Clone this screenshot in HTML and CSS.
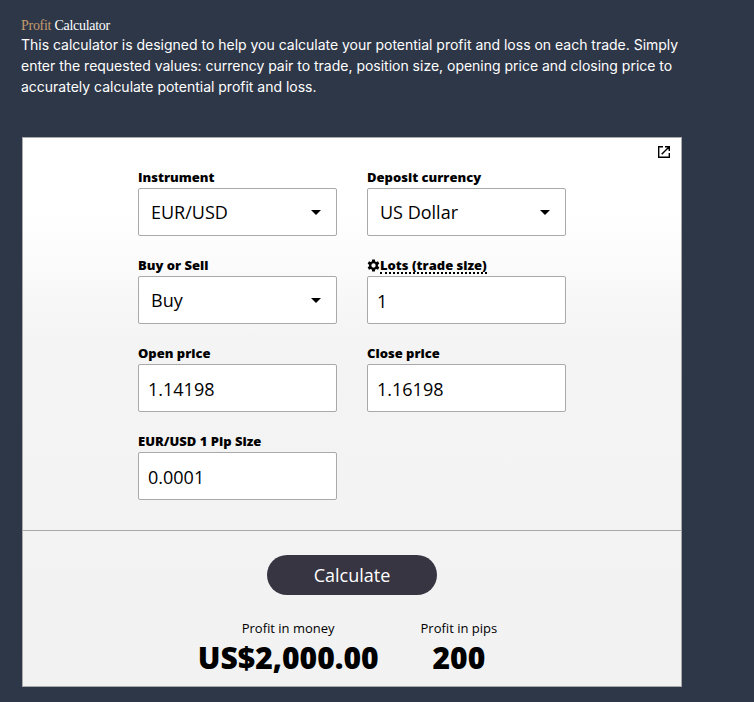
FILE: index.html
```html
<!DOCTYPE html>
<html lang="en">
<head>
<meta charset="UTF-8">
<meta name="viewport" content="width=device-width, initial-scale=1.0">
<title>Profit Calculator</title>
<link rel="stylesheet" href="styles.css">
</head>
<body>
<div class="intro">
  <h1 class="title"><span class="accent">Profit</span> Calculator</h1>
  <p class="description">This calculator is designed to help you calculate your potential profit and loss on each trade. Simply enter the requested values: currency pair to trade, position size, opening price and closing price to accurately calculate potential profit and loss.</p>
</div>
<form class="calculator">
  <div class="toolbar">
    <svg class="open-icon" viewBox="0 0 14 14" width="14" height="14">
      <path d="M6 1.700H1.700v10.600h10.600V8M8 1.700h4.300V6M12 2L4.700 9.300" fill="none" stroke="#000" stroke-width="1.400"/>
    </svg>
  </div>
  <div class="fields">
    <div class="field">
      <label for="instrument">Instrument</label>
      <div class="select">
        <select id="instrument"><option>EUR/USD</option></select>
        <svg class="arrow" viewBox="0 0 10 5" width="10" height="5"><path d="M0 0h10L5 5z"/></svg>
      </div>
    </div>
    <div class="field">
      <label for="currency">Deposit currency</label>
      <div class="select">
        <select id="currency"><option>US Dollar</option></select>
        <svg class="arrow" viewBox="0 0 10 5" width="10" height="5"><path d="M0 0h10L5 5z"/></svg>
      </div>
    </div>
    <div class="field">
      <label for="side">Buy or Sell</label>
      <div class="select">
        <select id="side"><option>Buy</option></select>
        <svg class="arrow" viewBox="0 0 10 5" width="10" height="5"><path d="M0 0h10L5 5z"/></svg>
      </div>
    </div>
    <div class="field">
      <label for="lots"><svg class="gear" viewBox="0 0 24 24" width="13" height="13"><path fill-rule="evenodd" d="M9.500 1h5l.6 3.400 2 1.200 3.200-1.300 2.500 4.400-2.700 2.100v2.400l2.700 2.100-2.500 4.400-3.200-1.300-2 1.200-.6 3.400h-5l-.6-3.400-2-1.200-3.200 1.300-2.500-4.400 2.700-2.100v-2.400L1.200 8.700l2.500-4.400 3.200 1.300 2-1.200zM12 8a4 4 0 1 0 0 8a4 4 0 1 0 0-8z"/></svg><span class="hint">Lots (trade size)</span></label>
      <input id="lots" type="text" value="1">
    </div>
    <div class="field">
      <label for="open">Open price</label>
      <input id="open" type="text" value="1.14198">
    </div>
    <div class="field">
      <label for="close">Close price</label>
      <input id="close" type="text" value="1.16198">
    </div>
    <div class="field">
      <label for="pip">EUR/USD 1 Pip Size</label>
      <input id="pip" type="text" value="0.0001">
    </div>
  </div>
  <div class="footer">
    <button class="calculate" type="button">Calculate</button>
    <div class="results">
      <div class="result">
        <div class="result-label">Profit in money</div>
        <div class="result-value">US$2,000.00</div>
      </div>
      <div class="result">
        <div class="result-label">Profit in pips</div>
        <div class="result-value">200</div>
      </div>
    </div>
  </div>
</form>
</body>
</html>
```
FILE: styles.css
```css
* {
  box-sizing: border-box;
}
body {
  margin: 0;
  padding: 17px 22px 15px;
  background-color: #2e3748;
  font-family: "Open Sans", sans-serif;
}
.intro {
  width: 664px;
  height: 120px;
  margin-left: -1px;
  color: #fff;
}
.title {
  height: 17px;
  margin: 0;
  font-family: "Liberation Serif", serif;
  font-size: 14px;
  font-weight: normal;
  line-height: 18px;
  letter-spacing: -0.28px;
}
.accent {
  color: #c59a6c;
}
.description {
  margin: 0;
  font-family: Inter, sans-serif;
  font-size: 14px;
  line-height: 21px;
  letter-spacing: -0.01px;
}
.calculator {
  width: 660px;
  height: 550px;
  border: 1px solid #a9a9a9;
  background: linear-gradient(#fff 75px, #f4f4f4 205px, #f2f2f2);
}
.toolbar {
  display: flex;
  justify-content: flex-end;
  height: 30px;
  padding: 7px 10px 0 0;
}
.fields {
  display: grid;
  grid-template-columns: 199px 199px;
  column-gap: 30px;
  height: 362px;
  padding-left: 115px;
  align-content: start;
}
.field {
  height: 88px;
}
label {
  display: flex;
  align-items: center;
  height: 18px;
  margin-bottom: 2px;
  font-size: 13px;
  font-weight: 800;
  line-height: 18px;
}
.hint {
  height: 18px;
  line-height: 18px;
  border-bottom: 2px dotted #000;
}
.select {
  display: flex;
  align-items: center;
}
select,
input {
  width: 199px;
  height: 48px;
  border: 1px solid #a9a9a9;
  border-radius: 2px;
  background-color: #fff;
  color: #000;
  font-family: inherit;
  font-size: 18px;
  outline: none;
}
select {
  appearance: none;
  padding: 0 12px;
}
input {
  padding: 2px 9px 0;
}
.arrow {
  margin-left: -26px;
}
.footer {
  display: flex;
  flex-direction: column;
  align-items: center;
  height: 156px;
  padding-top: 24px;
  border-top: 1px solid #a9a9a9;
}
.calculate {
  width: 170px;
  height: 40px;
  border: 0;
  border-radius: 20px;
  background-color: #373541;
  color: #fff;
  font-family: inherit;
  font-size: 18px;
}
.results {
  display: flex;
  gap: 42px;
  margin-top: 24px;
  padding-right: 9px;
  text-align: center;
}
.result-label {
  font-size: 13px;
  line-height: 19px;
}
.result-value {
  font-size: 30px;
  font-weight: 800;
  line-height: 39px;
}
```
